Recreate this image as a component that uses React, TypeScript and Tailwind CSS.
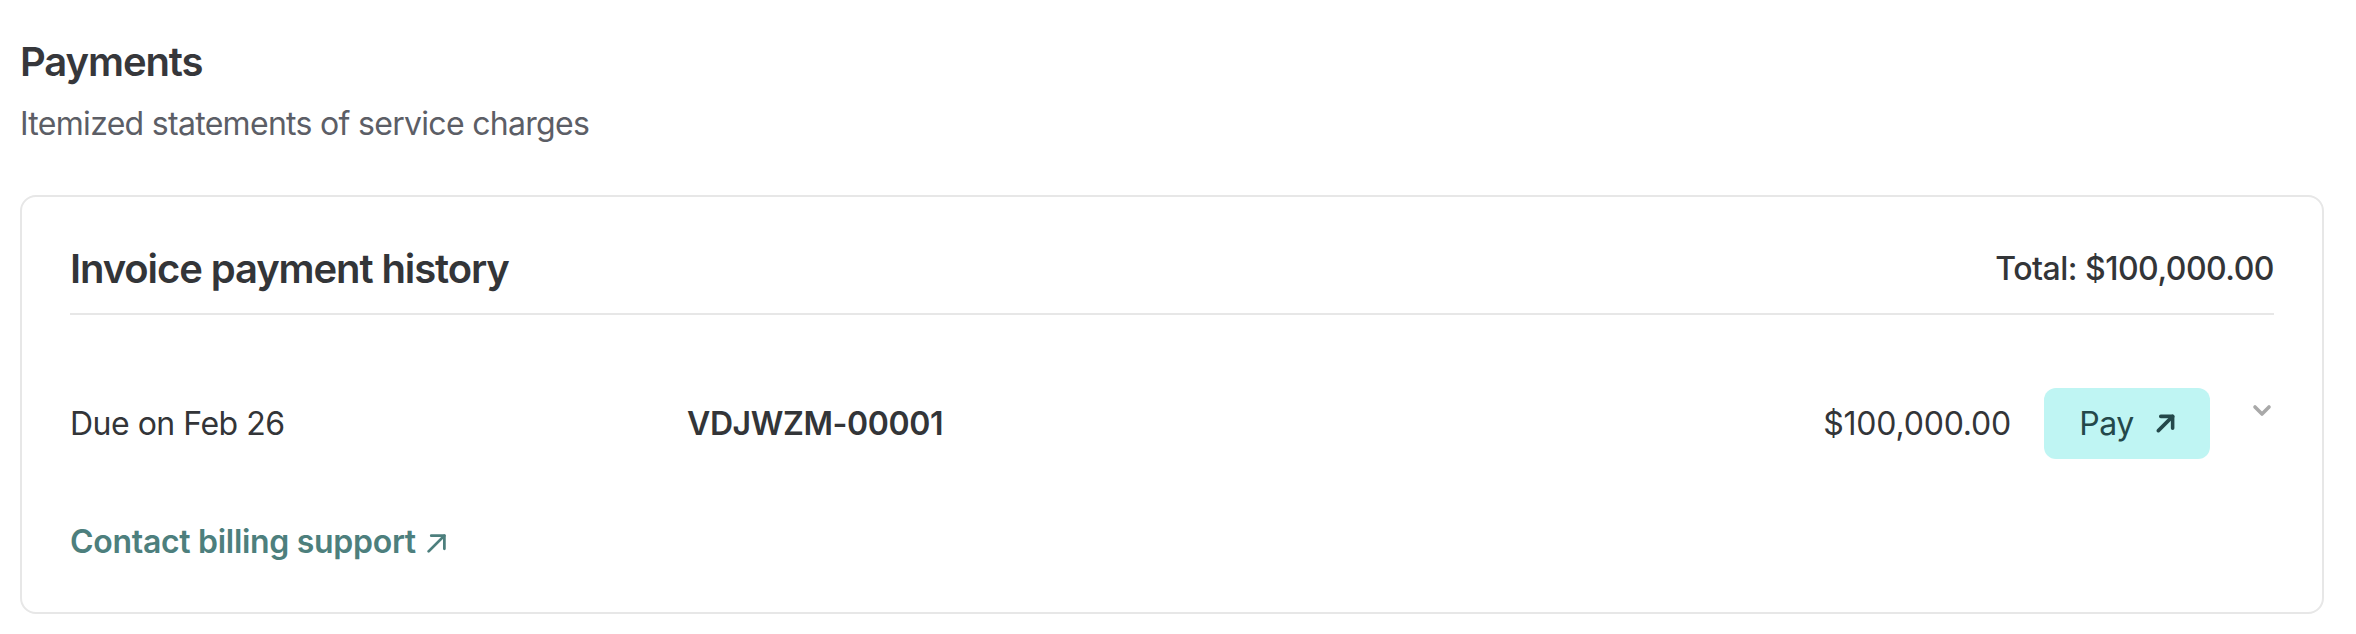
import React from 'react';

function ArrowUpRight({ className, strokeWidth = 3 }: { className?: string; strokeWidth?: number }) {
  return (
    <svg className={className} viewBox="4 4 16 16" fill="none" stroke="currentColor" strokeWidth={strokeWidth} strokeLinecap="round" strokeLinejoin="round">
      <path d="M6 18 18 6" />
      <path d="M8 6h10v10" />
    </svg>
  );
}

function Chevron() {
  return (
    <svg className="w-[20px] h-[13px] text-[#a9a9a9]" viewBox="0 0 20 13" fill="none" stroke="currentColor" strokeWidth={3.6} strokeLinecap="round" strokeLinejoin="round">
      <path d="M3 3l7 7 7-7" />
    </svg>
  );
}

export default function App() {
  const rows = [{ due: 'Due on Feb 26', id: 'VDJWZM-00001', amount: '$100,000.00' }];

  return (
    <div className="min-h-screen bg-white pt-[32px] pl-[20px] pr-[32px] font-['Inter',sans-serif]">
      <h1 className="text-[40px] leading-[60px] font-semibold text-[#36373b] tracking-[-1.1px]">Payments</h1>
      <p className="mt-[8px] text-[32px] leading-[48px] text-[#5c5e66] tracking-[-0.7px]">Itemized statements of service charges</p>

      <div className="mt-[47px] border-2 border-[#e7e7e7] rounded-[16px] p-[48px]">
        <div className="flex items-center justify-between h-[70px] pb-[20px] border-b-2 border-[#e7e7e7]">
          <h2 className="text-[40px] leading-[50px] font-semibold text-[#333538] tracking-[-1.1px]">Invoice payment history</h2>
          <span className="text-[32px] leading-[48px] font-medium text-[#333538] tracking-[-0.5px]">Total: $100,000.00</span>
        </div>

        {rows.map((row) => (
          <div key={row.id} className="mt-[73px] flex items-center h-[71px]">
            <span className="w-[617px] text-[32px] leading-[48px] text-[#333538] tracking-[-0.5px]">{row.due}</span>
            <span className="flex-1 text-[32px] leading-[48px] font-semibold text-[#333538] tracking-[-0.4px]">{row.id}</span>
            <span className="text-[32px] leading-[48px] text-[#333538] tracking-[-0.2px]">{row.amount}</span>
            <button className="ml-[33px] h-[71px] w-[166px] flex items-center justify-center gap-[22px] bg-[#bff5f3] rounded-[12px] text-[#24484a]">
              <span className="text-[32px] leading-[48px] tracking-[-0.5px]">Pay</span>
              <ArrowUpRight className="w-[19px] h-[19px]" strokeWidth={3} />
            </button>
            <div className="ml-[42px] mr-[2px] self-start mt-[16px]">
              <Chevron />
            </div>
          </div>
        ))}

        <a href="#" className="mt-[61px] flex items-center gap-[10px] text-[32px] leading-[44px] font-semibold text-[#4d7f7d] tracking-[-0.3px]">
          Contact billing support
          <ArrowUpRight className="w-[21px] h-[21px] mt-[2px]" strokeWidth={2.1} />
        </a>
      </div>
    </div>
  );
}
